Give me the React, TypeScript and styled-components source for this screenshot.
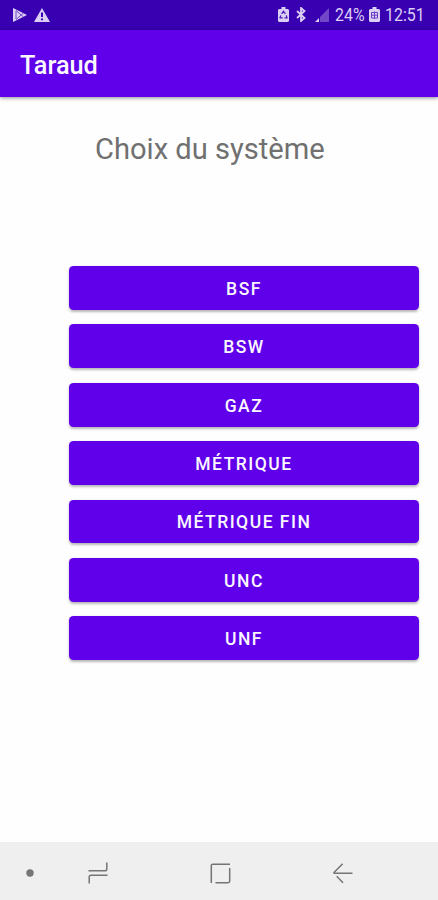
import React from "react";
import styled, { createGlobalStyle } from "styled-components";

const GlobalStyle = createGlobalStyle`
  * { box-sizing: border-box; }
  body { margin: 0; background: #fefefe; }
`;

const Screen = styled.div`
  width: 438px;
  height: 900px;
  display: flex;
  flex-direction: column;
  overflow: hidden;
  background: #fefefe;
  font-family: Roboto, "Liberation Sans", sans-serif;
`;

const StatusBar = styled.div`
  flex: 0 0 30px;
  display: flex;
  justify-content: space-between;
  padding: 0 13px 0 12px;
  background: #3900b1;
  color: #dccff5;
`;

const StatusGroup = styled.div`
  display: flex;
  align-items: center;
  height: 29px;
`;

const StatusIcon = styled.svg<{ $gap?: number }>`
  display: block;
  flex: none;
  margin-right: ${({ $gap = 0 }) => $gap}px;
`;

const StatusText = styled.span<{ $width: number; $gap?: number }>`
  width: ${({ $width }) => $width}px;
  margin-right: ${({ $gap = 0 }) => $gap}px;
  font-size: 18.5px;
  line-height: 30px;
  white-space: nowrap;
  transform: scaleX(0.86);
  transform-origin: left center;
`;

const AppBar = styled.header`
  flex: 0 0 67px;
  padding-left: 20px;
  display: flex;
  align-items: center;
  background: #6000ea;
  box-shadow: 0 1px 4px rgba(0, 0, 0, 0.45);
`;

const AppTitle = styled.h1`
  margin: 5px 0 0;
  color: #fbf7ff;
  font-size: 25.3px;
  font-weight: 500;
  line-height: 32px;
  letter-spacing: 0;
`;

const Content = styled.main`
  flex: 1;
  display: flex;
  flex-direction: column;
`;

const Heading = styled.h2`
  margin: 34px 0 0 95px;
  color: #707070;
  font-size: 29.1px;
  font-weight: 400;
  line-height: 36px;
  white-space: nowrap;
`;

const SystemList = styled.div`
  display: flex;
  flex-direction: column;
  gap: 14.6px;
  margin: 99px 19px 0 69px;
`;

const SystemButton = styled.button`
  height: 43.8px;
  padding: 2px 0 0;
  border: 0;
  border-radius: 4.5px;
  background: #6000ea;
  color: #fbf7ff;
  box-shadow: 0 1.5px 2.5px rgba(0, 0, 0, 0.28);
  font-family: inherit;
  font-size: 17.5px;
  font-weight: 500;
  letter-spacing: 1.5px;
`;

const NavigationBar = styled.nav`
  flex: 0 0 58px;
  display: grid;
  grid-template-columns: 59px 78px 167px 78px 1fr;
  align-items: center;
  justify-items: center;
  padding-top: 4px;
  background: #efefef;
  color: #757575;
`;

const systems = ["BSF", "BSW", "GAZ", "MÉTRIQUE", "MÉTRIQUE FIN", "UNC", "UNF"];

const BatteryIcon = ({ kind, gap }: { kind: "saver" | "charging"; gap: number }) => (
  <StatusIcon $gap={gap} width="11" height="15" viewBox="0 0 11 15">
    <path d="M3.5 0h4v2H10l1 1v11l-1 1H1l-1-1V3l1-1h2.5z" fill="currentColor" />
    {kind === "saver" ? (
      <path d="M3.6 6.8L5.5 4.2L7.4 6.8M8.3 8.4L9 10.8H6.5M4.7 10.8H2L2.7 8.4" fill="none" stroke="#4a17b6" strokeWidth="1.2" />
    ) : (
      <path d="M5.5 4.5v7.5M2.5 8.2h6M2.5 5.5h6v5.5h-6z" fill="none" stroke="#6a3dc6" strokeWidth="1" />
    )}
  </StatusIcon>
);

export default function App() {
  return (
    <>
      <GlobalStyle />
      <Screen>
        <StatusBar>
          <StatusGroup>
            <StatusIcon $gap={7} width="15" height="14" viewBox="0 0 15 14">
              <path d="M1 0l14 7-14 7z" fill="currentColor" />
              <path d="M4 2.5L11.5 9M4 11.5L11.5 5M4 3v8" fill="none" stroke="#5928bd" strokeWidth=".8" />
            </StatusIcon>
            <StatusIcon width="16" height="14" viewBox="0 0 16 14">
              <path d="M8 0l8 14H0z" fill="currentColor" />
              <path d="M8 4.5v4.5M8 10.5v1.8" stroke="#3900b1" strokeWidth="2" />
            </StatusIcon>
          </StatusGroup>
          <StatusGroup>
            <BatteryIcon kind="saver" gap={7} />
            <StatusIcon $gap={9} width="10" height="15" viewBox="0 0 10 15">
              <path d="M1 4l7.5 7L5 14V1l3.5 3L1 11" fill="none" stroke="currentColor" strokeWidth="1.8" />
            </StatusIcon>
            <StatusIcon $gap={6} width="14" height="14" viewBox="0 0 14 14">
              <path d="M14 0v14H5V9z" fill="#7147c8" />
              <path d="M4 10v4H0z" fill="currentColor" />
            </StatusIcon>
            <StatusText $width={31} $gap={3}>24%</StatusText>
            <BatteryIcon kind="charging" gap={5} />
            <StatusText $width={40}>12:51</StatusText>
          </StatusGroup>
        </StatusBar>
        <AppBar>
          <AppTitle>Taraud</AppTitle>
        </AppBar>
        <Content>
          <Heading>Choix du système</Heading>
          <SystemList>
            {systems.map((system) => (
              <SystemButton key={system} type="button">{system}</SystemButton>
            ))}
          </SystemList>
        </Content>
        <NavigationBar>
          <svg width="8" height="8" viewBox="0 0 8 8">
            <circle cx="4" cy="4" r="3.7" fill="currentColor" />
          </svg>
          <svg width="20" height="22" viewBox="0 0 20 22" fill="none" stroke="currentColor" strokeWidth="1.5">
            <path d="M.5 8.8H17q1.8 0 1.8-1.8V.5M19.5 13.2H3q-1.8 0-1.8 1.8v6.5" />
          </svg>
          <svg width="21" height="21" viewBox="0 0 21 21" fill="none" stroke="currentColor" strokeWidth="1.5">
            <path d="M1.3 20V2.5q0-1.3 1.3-1.3H20M19.7 5v13q0 1.7-1.7 1.7H5.5" />
          </svg>
          <svg width="20" height="21" viewBox="0 0 20 21" fill="none" stroke="currentColor" strokeWidth="1.5">
            <path d="M9.7.8L1.2 9.2q-1 1 .3 1H19.5M3.7 13.2l6.3 6.6" />
          </svg>
        </NavigationBar>
      </Screen>
    </>
  );
}
